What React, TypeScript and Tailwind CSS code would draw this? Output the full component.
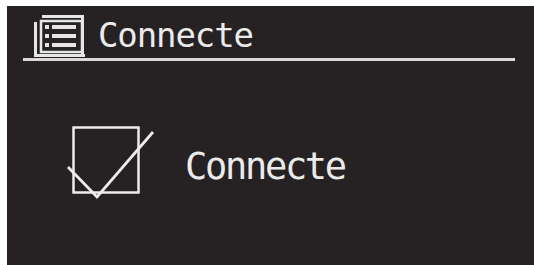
import React from 'react';

const ListIcon = () => (
  <svg width="54" height="44" viewBox="0 0 54 44" fill="none" className="shrink-0">
    {/* back frame */}
    <path d="M10 2.5 H50.5 V40" stroke="#e6e6e6" strokeWidth="3" />
    <path d="M3.5 8 V41.5 H53" stroke="#e6e6e6" strokeWidth="3" />
    {/* inner card */}
    <rect x="9" y="7" width="41" height="31" stroke="#e6e6e6" strokeWidth="2.5" />
    {[11, 20, 29].map((y) => (
      <g key={y}>
        <rect x="13" y={y} width="4" height="4" fill="#e6e6e6" />
        <rect x="20" y={y} width="24" height="4" fill="#e6e6e6" />
      </g>
    ))}
  </svg>
);

const CheckIcon = () => (
  <svg width="94" height="78" viewBox="0 0 94 78" fill="none" className="shrink-0">
    <rect x="9.5" y="4.5" width="65" height="65" stroke="#ececec" strokeWidth="2.5" />
    <path d="M4 44 L33 74 L89 9" stroke="#ececec" strokeWidth="2.8" strokeLinejoin="miter" />
  </svg>
);

export default function App() {
  return (
    <div className="w-[534px] h-[265px] bg-white pt-[6px] pl-[7px] overflow-hidden flex">
      <div className="flex-1 h-full bg-[#262223] flex flex-col font-['DejaVu_Sans_Mono',monospace] text-[#ebebeb]">
        {/* Titelzeile */}
        <div className="ml-[16px] mr-[19px] mt-[8px] h-[47px] border-b-[3px] border-[#dadada] flex items-start pl-[9px]">
          <ListIcon />
          <span className="ml-[12px] mt-[4px] text-[34px] leading-none tracking-[-1.1px]">Connecte</span>
        </div>

        {/* Inhalt */}
        <div className="flex items-start mt-[62px]">
          <div className="ml-[57px]">
            <CheckIcon />
          </div>
          <span className="ml-[27px] mt-[25px] text-[37px] leading-none tracking-[-2.3px]">Connecte</span>
        </div>
      </div>
    </div>
  );
}
